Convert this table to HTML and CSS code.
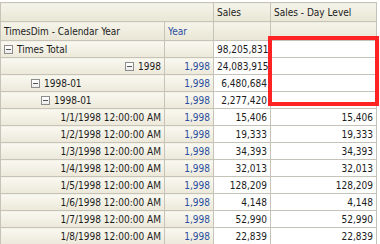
FILE: index.html
```html
<!DOCTYPE html>
<html lang="en">
	<head>
		<meta charset="UTF-8" />
		<title>Pivot - Sales</title>
		<link rel="stylesheet" href="styles.css">
	</head>
	<body>
		<div class="pivot">
			<table class="grid">
				<colgroup>
					<col class="c-dim">
					<col class="c-year">
					<col class="c-sales">
					<col class="c-day">
				</colgroup>
				<tr class="hdr">
					<th colspan="2"></th>
					<th>Sales</th>
					<th>Sales - Day Level</th>
				</tr>
				<tr class="hdr">
					<th>TimesDim - Calendar Year</th>
					<th class="blue">Year</th>
					<th></th>
					<th></th>
				</tr>
				<tr>
					<td class="rh"><span class="tg"></span>Times Total</td>
					<td class="rh"></td>
					<td class="num">98,205,831</td>
					<td class="num"></td>
				</tr>
				<tr>
					<td class="rh right"><span class="tg"></span>1998</td>
					<td class="rh num blue">1,998</td>
					<td class="num">24,083,915</td>
					<td class="num"></td>
				</tr>
				<tr>
					<td class="rh lv2"><span class="tg"></span>1998-01</td>
					<td class="rh num blue">1,998</td>
					<td class="num">6,480,684</td>
					<td class="num"></td>
				</tr>
				<tr>
					<td class="rh lv3"><span class="tg"></span>1998-01</td>
					<td class="rh num blue">1,998</td>
					<td class="num">2,277,420</td>
					<td class="num"></td>
				</tr>
				<tr>
					<td class="rh right">1/1/1998 12:00:00 AM</td>
					<td class="rh num blue">1,998</td>
					<td class="num">15,406</td>
					<td class="num">15,406</td>
				</tr>
				<tr>
					<td class="rh right">1/2/1998 12:00:00 AM</td>
					<td class="rh num blue">1,998</td>
					<td class="num">19,333</td>
					<td class="num">19,333</td>
				</tr>
				<tr>
					<td class="rh right">1/3/1998 12:00:00 AM</td>
					<td class="rh num blue">1,998</td>
					<td class="num">34,393</td>
					<td class="num">34,393</td>
				</tr>
				<tr>
					<td class="rh right">1/4/1998 12:00:00 AM</td>
					<td class="rh num blue">1,998</td>
					<td class="num">32,013</td>
					<td class="num">32,013</td>
				</tr>
				<tr>
					<td class="rh right">1/5/1998 12:00:00 AM</td>
					<td class="rh num blue">1,998</td>
					<td class="num">128,209</td>
					<td class="num">128,209</td>
				</tr>
				<tr>
					<td class="rh right">1/6/1998 12:00:00 AM</td>
					<td class="rh num blue">1,998</td>
					<td class="num">4,148</td>
					<td class="num">4,148</td>
				</tr>
				<tr>
					<td class="rh right">1/7/1998 12:00:00 AM</td>
					<td class="rh num blue">1,998</td>
					<td class="num">52,990</td>
					<td class="num">52,990</td>
				</tr>
				<tr>
					<td class="rh right">1/8/1998 12:00:00 AM</td>
					<td class="rh num blue">1,998</td>
					<td class="num">22,839</td>
					<td class="num">22,839</td>
				</tr>
				<tr>
					<td class="rh"></td>
					<td class="rh"></td>
					<td class="num"></td>
					<td class="num"></td>
				</tr>
			</table>
			<!-- highlight over the empty day-level cells -->
			<div class="mark"></div>
		</div>
	</body>
</html>
```

FILE: styles.css
```css
* { margin: 0; padding: 0; box-sizing: border-box; }
body {
	background: white;
	font-family: 'DejaVu Sans Condensed', 'DejaVu Sans', sans-serif;
	font-size: 10px;
	color: #1c1c1c;
	overflow: hidden;
}
.pivot {
	position: relative;
	padding-top: 2px;
	width: 380px;
	height: 244px;
	overflow: hidden;
}
.grid {
	border-collapse: collapse;
	table-layout: fixed;
	width: 376px;
}
.c-dim { width: 164px; }
.c-year { width: 49px; }
.c-sales { width: 57px; }
.c-day { width: 106px; }
th, td {
	border: 1px solid #c6c4b8;
	height: 17px;
	padding: 0 3px;
	white-space: nowrap;
	overflow: hidden;
	text-align: left;
	font-weight: normal;
}
.hdr th {
	height: 19px;
	background: linear-gradient(#f5f4ea, #e9e6d5);
}
.rh {
	background: linear-gradient(#faf9f1, #ece9da);
}
.num { text-align: right; }
.right { text-align: right; }
.blue { color: #2a4d9e; }
.lv2 { padding-left: 30px; }
.lv3 { padding-left: 40px; }
.tg {
	display: inline-block;
	width: 9px;
	height: 9px;
	border: 1px solid #8d8d8d;
	background: linear-gradient(#fff, #ececec);
	margin-right: 4px;
	vertical-align: -1px;
	position: relative;
}
.tg::after {
	content: "";
	position: absolute;
	left: 1px;
	right: 1px;
	top: 3px;
	height: 1px;
	background: #555;
}
.mark {
	position: absolute;
	left: 268px;
	top: 36px;
	width: 111px;
	height: 70px;
	border: 4px solid #ff2323;
}
```
